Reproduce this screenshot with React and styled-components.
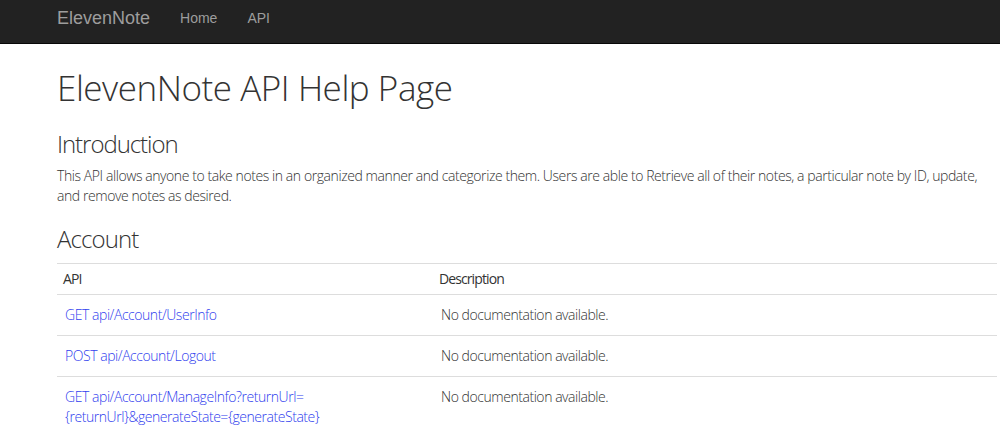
import React from "react";
import styled, { createGlobalStyle } from "styled-components";

const GlobalStyle = createGlobalStyle`
  html, body { margin: 0; padding: 0; background: #fff; }
  body {
    font-family: "Open Sans", "Noto Sans", sans-serif;
    font-size: 14px;
    line-height: 20px;
    color: #333;
  }
`;

const Navbar = styled.nav`
  height: 43px;
  background: #222;
  border-bottom: 1px solid #080808;
  display: flex;
  align-items: flex-start;
  padding-left: 42px;
  font-family: "Liberation Sans", Arial, sans-serif;
`;

const Brand = styled.a`
  padding: 8px 15px 0;
  font-size: 18px;
  line-height: 20px;
  color: #9d9d9d;
  text-decoration: none;
`;

const NavLink = styled.a`
  padding: 8px 15px 0;
  font-size: 14px;
  line-height: 20px;
  color: #9d9d9d;
  text-decoration: none;
`;

const Page = styled.main`
  padding-left: 57px;
  width: 940px;
`;

const Title = styled.h1`
  margin: 24px 0 0;
  font-size: 35px;
  line-height: 39.6px;
  letter-spacing: -0.45px;
  font-weight: 300;
  color: #333;
`;

const SectionTitle = styled.h2`
  margin: ${(p) => p.$top}px 0 0;
  font-size: 24px;
  line-height: 28.6px;
  letter-spacing: ${(p) => p.$ls}px;
  font-weight: 300;
  color: #333;
`;

const Intro = styled.p`
  margin: 8px 0 0;
  font-weight: 300;
  letter-spacing: -0.42px;
`;

const Table = styled.table`
  margin-top: 9px;
  width: 940px;
  border-collapse: collapse;
`;

const HeadCell = styled.th`
  text-align: left;
  font-weight: 400;
  letter-spacing: -0.9px;
  padding: 5px 6px;
  border-top: 1px solid #ddd;
  border-bottom: 1px solid #ddd;
  width: ${(p) => p.$w || "auto"};
`;

const Cell = styled.td`
  vertical-align: top;
  padding: 10px 6px 10px 8px;
  border-bottom: 1px solid #ddd;
  font-weight: 300;
  letter-spacing: -0.45px;
`;

const ApiLink = styled.a`
  color: #3040ee;
  text-decoration: none;
`;

const rows = [
  { name: "GET api/Account/UserInfo" },
  { name: "POST api/Account/Logout" },
  {
    name: (
      <>
        GET api/Account/ManageInfo?returnUrl=
        <wbr />
        {"{returnUrl}&generateState={generateState}"}
      </>
    ),
  },
];

export default function App() {
  return (
    <>
      <GlobalStyle />
      <Navbar>
        <Brand href="#">ElevenNote</Brand>
        <NavLink href="#">Home</NavLink>
        <NavLink href="#">API</NavLink>
      </Navbar>
      <Page>
        <Title>ElevenNote API Help Page</Title>
        <SectionTitle $top={22} $ls={-1.05}>Introduction</SectionTitle>
        <Intro>
          This API allows anyone to take notes in an organized manner and
          categorize them. Users are able to Retrieve all of their notes, a
          particular note by ID, update, and remove notes as desired.
        </Intro>
        <SectionTitle $top={19} $ls={-0.9}>Account</SectionTitle>
        <Table>
          <thead>
            <tr>
              <HeadCell $w="40%">API</HeadCell>
              <HeadCell>Description</HeadCell>
            </tr>
          </thead>
          <tbody>
            {rows.map((r, i) => (
              <tr key={i}>
                <Cell>
                  <ApiLink href="#">{r.name}</ApiLink>
                </Cell>
                <Cell>No documentation available.</Cell>
              </tr>
            ))}
          </tbody>
        </Table>
      </Page>
    </>
  );
}
